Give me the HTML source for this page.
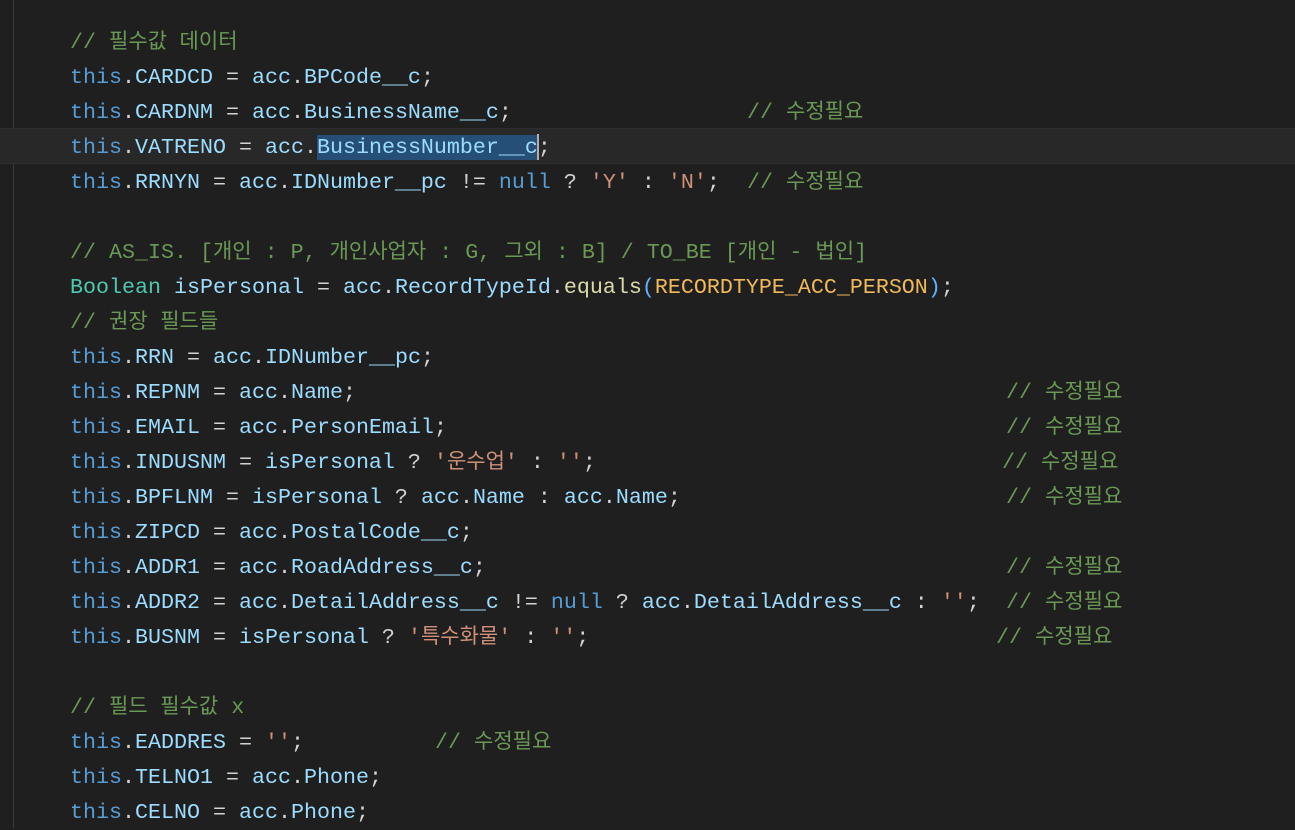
<!DOCTYPE html>
<html><head><meta charset="utf-8"><style>
html,body{margin:0;padding:0;background:#1f1f1f;width:1295px;height:828px;overflow:hidden}
.guide{position:absolute;left:13px;top:0;width:1px;height:828px;background:#3a3a3a}
.cur{position:absolute;left:0;top:128px;width:1295px;height:34px;background:#282828;border-top:1px solid #2e2e2e;border-bottom:1px solid #2e2e2e}
.l{position:absolute;left:70px;height:35px;line-height:35px;white-space:pre;font-family:"Liberation Mono","Noto Sans CJK KR",monospace;font-size:21.67px;color:#d4d4d4;margin-top:2px}
.k{color:#569cd6}.p{color:#9cdcfe}.s{color:#ce9178}.c{color:#6a9955}.t{color:#4ec9b0}.f{color:#dcdcaa}.o{color:#f0b95a}.b{color:#5fb3ff}
.ko{font-size:21px}
.sel{background:#264f78}
.caret{display:inline-block;width:2px;height:26px;background:#aeafad;vertical-align:middle;margin-left:-1px;margin-right:-1px}
</style></head><body>
<div class="guide"></div>
<div class="cur"></div>
<div class="l c" style="top:23px">// <span class="ko">필수값 데이터</span></div>
<div class="l" style="top:58px"><span class="k">this</span>.<span class="p">CARDCD</span> = <span class="p">acc</span>.<span class="p">BPCode__c</span>;</div>
<div class="l" style="top:93px"><span class="k">this</span>.<span class="p">CARDNM</span> = <span class="p">acc</span>.<span class="p">BusinessName__c</span>;</div>
<div class="l c" style="top:93px;left:747px">// <span class="ko">수정필요</span></div>
<div class="l" style="top:128px"><span class="k">this</span>.<span class="p">VATRENO</span> = <span class="p">acc</span>.<span class="p sel">BusinessNumber__c</span><span class="caret"></span>;</div>
<div class="l" style="top:163px"><span class="k">this</span>.<span class="p">RRNYN</span> = <span class="p">acc</span>.<span class="p">IDNumber__pc</span> != <span class="k">null</span> ? <span class="s">'Y'</span> : <span class="s">'N'</span>;</div>
<div class="l c" style="top:163px;left:747px">// <span class="ko">수정필요</span></div>
<div class="l c" style="top:233px">// AS_IS. [<span class="ko">개인</span> : P, <span class="ko">개인사업자</span> : G, <span class="ko">그외</span> : B] / TO_BE [<span class="ko">개인</span> - <span class="ko">법인</span>]</div>
<div class="l" style="top:268px"><span class="t">Boolean</span> <span class="p">isPersonal</span> = <span class="p">acc</span>.<span class="p">RecordTypeId</span>.<span class="f">equals</span><span class="b">(</span><span class="o">RECORDTYPE_ACC_PERSON</span><span class="b">)</span>;</div>
<div class="l c" style="top:303px">// <span class="ko">권장 필드들</span></div>
<div class="l" style="top:338px"><span class="k">this</span>.<span class="p">RRN</span> = <span class="p">acc</span>.<span class="p">IDNumber__pc</span>;</div>
<div class="l" style="top:373px"><span class="k">this</span>.<span class="p">REPNM</span> = <span class="p">acc</span>.<span class="p">Name</span>;</div>
<div class="l c" style="top:373px;left:1006px">// <span class="ko">수정필요</span></div>
<div class="l" style="top:408px"><span class="k">this</span>.<span class="p">EMAIL</span> = <span class="p">acc</span>.<span class="p">PersonEmail</span>;</div>
<div class="l c" style="top:408px;left:1006px">// <span class="ko">수정필요</span></div>
<div class="l" style="top:443px"><span class="k">this</span>.<span class="p">INDUSNM</span> = <span class="p">isPersonal</span> ? <span class="s">'<span class="ko">운수업</span>'</span> : <span class="s">''</span>;</div>
<div class="l c" style="top:443px;left:1002px">// <span class="ko">수정필요</span></div>
<div class="l" style="top:478px"><span class="k">this</span>.<span class="p">BPFLNM</span> = <span class="p">isPersonal</span> ? <span class="p">acc</span>.<span class="p">Name</span> : <span class="p">acc</span>.<span class="p">Name</span>;</div>
<div class="l c" style="top:478px;left:1006px">// <span class="ko">수정필요</span></div>
<div class="l" style="top:513px"><span class="k">this</span>.<span class="p">ZIPCD</span> = <span class="p">acc</span>.<span class="p">PostalCode__c</span>;</div>
<div class="l" style="top:548px"><span class="k">this</span>.<span class="p">ADDR1</span> = <span class="p">acc</span>.<span class="p">RoadAddress__c</span>;</div>
<div class="l c" style="top:548px;left:1006px">// <span class="ko">수정필요</span></div>
<div class="l" style="top:583px"><span class="k">this</span>.<span class="p">ADDR2</span> = <span class="p">acc</span>.<span class="p">DetailAddress__c</span> != <span class="k">null</span> ? <span class="p">acc</span>.<span class="p">DetailAddress__c</span> : <span class="s">''</span>;</div>
<div class="l c" style="top:583px;left:1006px">// <span class="ko">수정필요</span></div>
<div class="l" style="top:618px"><span class="k">this</span>.<span class="p">BUSNM</span> = <span class="p">isPersonal</span> ? <span class="s">'<span class="ko">특수화물</span>'</span> : <span class="s">''</span>;</div>
<div class="l c" style="top:618px;left:996px">// <span class="ko">수정필요</span></div>
<div class="l c" style="top:688px">// <span class="ko">필드 필수값</span> x</div>
<div class="l" style="top:723px"><span class="k">this</span>.<span class="p">EADDRES</span> = <span class="s">''</span>;</div>
<div class="l c" style="top:723px;left:435px">// <span class="ko">수정필요</span></div>
<div class="l" style="top:758px"><span class="k">this</span>.<span class="p">TELNO1</span> = <span class="p">acc</span>.<span class="p">Phone</span>;</div>
<div class="l" style="top:793px"><span class="k">this</span>.<span class="p">CELNO</span> = <span class="p">acc</span>.<span class="p">Phone</span>;</div>
</body></html>
